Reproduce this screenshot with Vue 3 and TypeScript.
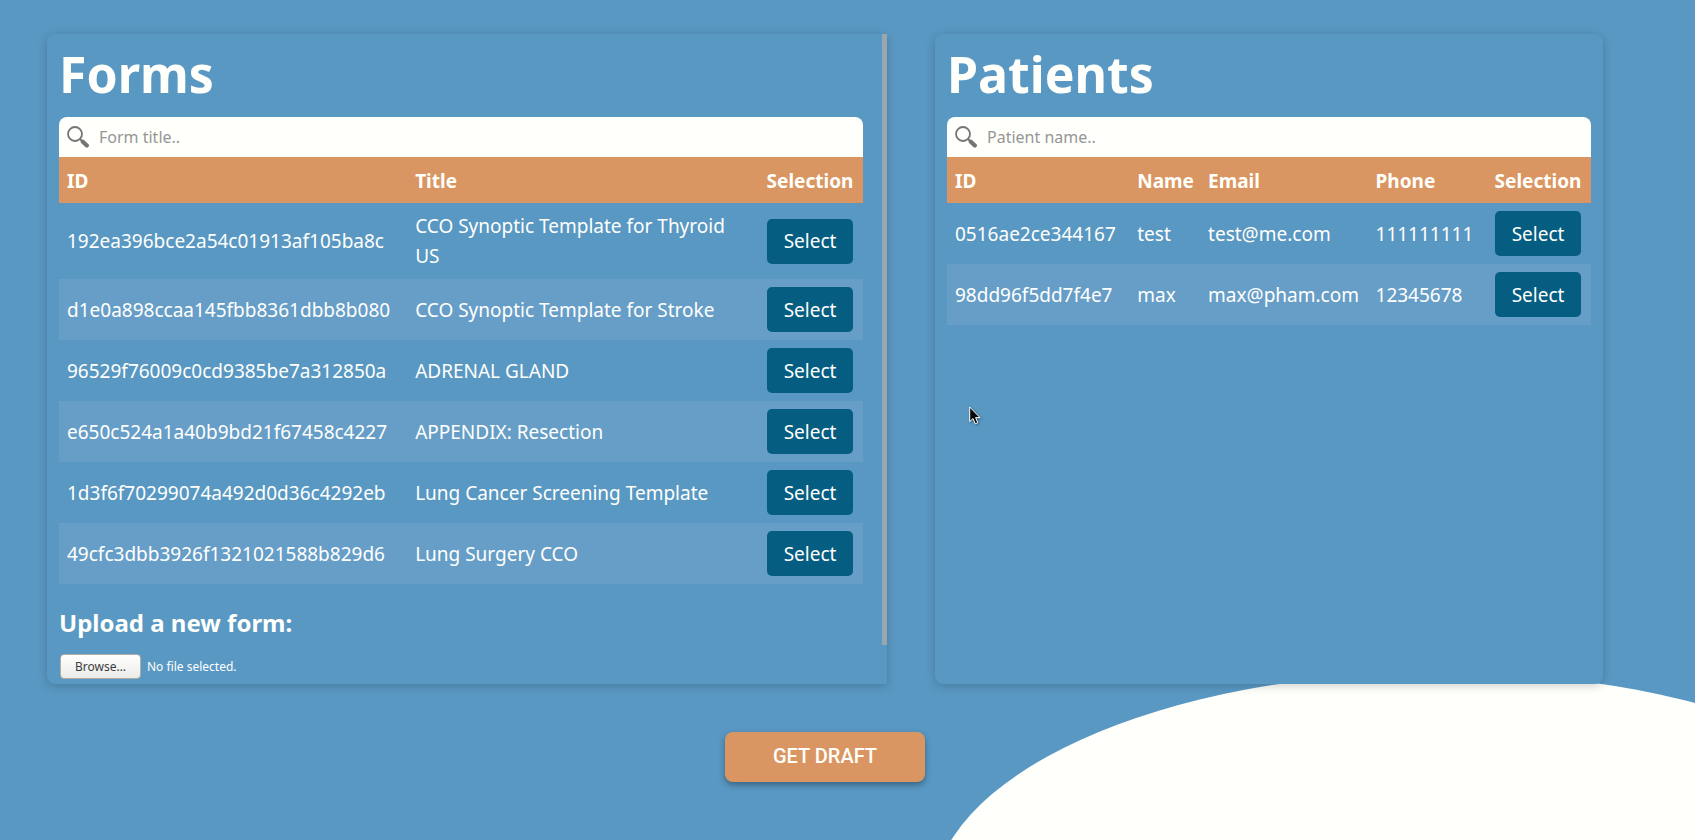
<script setup lang="ts">
import { computed, ref } from 'vue'

interface FormRow {
  id: string
  title: string
}

interface PatientRow {
  id: string
  name: string
  email: string
  phone: string
}

const forms: FormRow[] = [
  { id: '192ea396bce2a54c01913af105ba8c', title: 'CCO Synoptic Template for Thyroid US' },
  { id: 'd1e0a898ccaa145fbb8361dbb8b080', title: 'CCO Synoptic Template for Stroke' },
  { id: '96529f76009c0cd9385be7a312850a', title: 'ADRENAL GLAND' },
  { id: 'e650c524a1a40b9bd21f67458c4227', title: 'APPENDIX: Resection' },
  { id: '1d3f6f70299074a492d0d36c4292eb', title: 'Lung Cancer Screening Template' },
  { id: '49cfc3dbb3926f1321021588b829d6', title: 'Lung Surgery CCO' },
]

const patients: PatientRow[] = [
  { id: '0516ae2ce344167', name: 'test', email: 'test@me.com', phone: '111111111' },
  { id: '98dd96f5dd7f4e7', name: 'max', email: 'max@pham.com', phone: '12345678' },
]

const formQuery = ref('')
const patientQuery = ref('')
const fileName = ref('No file selected.')

const shownForms = computed(() =>
  forms.filter((f) => f.title.toLowerCase().includes(formQuery.value.toLowerCase())),
)
const shownPatients = computed(() =>
  patients.filter((p) => p.name.toLowerCase().includes(patientQuery.value.toLowerCase())),
)

function onFile(event: Event) {
  const files = (event.target as HTMLInputElement).files
  fileName.value = files && files.length ? files[0].name : 'No file selected.'
}
</script>

<template>
  <div class="page">
    <div class="blob" aria-hidden="true"></div>
    <main class="content">
      <div class="panels">
        <section class="panel panel-forms">
          <h1>Forms</h1>
          <div class="search">
            <svg class="search-icon" viewBox="0 0 22 22" aria-hidden="true">
              <circle cx="8" cy="8" r="7" fill="none" stroke="#747474" stroke-width="1.8" />
              <path d="M12.8 12.8 L15.4 15.4" stroke="#747474" stroke-width="2" />
              <path d="M15.8 15.8 L19.8 19.6" stroke="#747474" stroke-width="4.2" stroke-linecap="round" />
            </svg>
            <input v-model="formQuery" type="text" placeholder="Form title.." aria-label="Form title" />
          </div>
          <table>
            <colgroup>
              <col class="form-id" />
              <col />
              <col class="form-select" />
            </colgroup>
            <thead>
              <tr>
                <th scope="col">ID</th>
                <th scope="col">Title</th>
                <th scope="col" class="pick">Selection</th>
              </tr>
            </thead>
            <tbody>
              <tr v-for="form in shownForms" :key="form.id">
                <td>{{ form.id }}</td>
                <td class="wrap">{{ form.title }}</td>
                <td class="pick"><button type="button" class="select">Select</button></td>
              </tr>
            </tbody>
          </table>
          <h2>Upload a new form:</h2>
          <div class="upload">
            <input id="form-file" class="file-input" type="file" @change="onFile" />
            <label for="form-file" class="browse">Browse…</label>
            <span>{{ fileName }}</span>
          </div>
          <div class="thumb" aria-hidden="true"></div>
        </section>

        <section class="panel">
          <h1>Patients</h1>
          <div class="search">
            <svg class="search-icon" viewBox="0 0 22 22" aria-hidden="true">
              <circle cx="8" cy="8" r="7" fill="none" stroke="#747474" stroke-width="1.8" />
              <path d="M12.8 12.8 L15.4 15.4" stroke="#747474" stroke-width="2" />
              <path d="M15.8 15.8 L19.8 19.6" stroke="#747474" stroke-width="4.2" stroke-linecap="round" />
            </svg>
            <input v-model="patientQuery" type="text" placeholder="Patient name.." aria-label="Patient name" />
          </div>
          <table>
            <colgroup>
              <col class="patient-id" />
              <col class="patient-name" />
              <col class="patient-email" />
              <col />
              <col class="patient-select" />
            </colgroup>
            <thead>
              <tr>
                <th scope="col">ID</th>
                <th scope="col">Name</th>
                <th scope="col">Email</th>
                <th scope="col">Phone</th>
                <th scope="col" class="pick">Selection</th>
              </tr>
            </thead>
            <tbody>
              <tr v-for="patient in shownPatients" :key="patient.id">
                <td>{{ patient.id }}</td>
                <td>{{ patient.name }}</td>
                <td>{{ patient.email }}</td>
                <td>{{ patient.phone }}</td>
                <td class="pick"><button type="button" class="select">Select</button></td>
              </tr>
            </tbody>
          </table>
        </section>
      </div>
      <button type="button" class="draft">GET DRAFT</button>
    </main>
    <svg class="pointer" viewBox="0 0 12 19" aria-hidden="true">
      <path
        d="M0.7 1 V15.6 L4 12.6 L6.3 17.8 L8.8 16.7 L6.6 11.6 H11 Z"
        fill="#0a0a0a"
        stroke="#ffffff"
        stroke-width="1"
      />
    </svg>
  </div>
</template>

<style>
body {
  margin: 0;
  background: #5998c3;
}
</style>

<style scoped>
.page {
  position: relative;
  box-sizing: border-box;
  min-height: 100vh;
  overflow: hidden;
  background: #5998c3;
  color: #fffffc;
  font-family: 'Noto Sans', 'Open Sans', sans-serif;
  font-size: 19px;
  line-height: 30px;
}

.blob {
  position: absolute;
  left: 55%;
  top: 80vh;
  width: 60%;
  height: 55vh;
  border-radius: 50%;
  background: #fffffc;
}

.content {
  position: relative;
  display: flex;
  flex-direction: column;
  align-items: center;
  gap: 48px;
  padding: 34px 92px 48px 47px;
}

.panels {
  display: grid;
  grid-template-columns: 840fr 668fr;
  gap: 48px;
  width: 100%;
}

.panel {
  position: relative;
  box-sizing: border-box;
  min-width: 0;
  padding: 10px 12px 5px;
  border-radius: 8px;
  background: #5998c3;
  box-shadow: 0 2px 10px rgba(0, 0, 0, 0.2);
}

.panel-forms {
  padding-right: 24px;
  border-radius: 8px 0 0 8px;
}

h1 {
  margin: 0 0 13px;
  font-size: 50px;
  font-weight: 700;
  line-height: 60px;
}

h2 {
  margin: 23px 0 15px;
  font-size: 24px;
  font-weight: 700;
  line-height: 32px;
}

.search {
  display: flex;
  align-items: center;
  gap: 10px;
  height: 40px;
  padding: 0 8px;
  border-radius: 8px 8px 0 0;
  background: #fffffc;
}

.search-icon {
  flex: none;
  width: 22px;
  height: 22px;
}

.search input {
  flex: 1;
  min-width: 0;
  padding: 0;
  border: 0;
  outline: 0;
  background: transparent;
  color: #444444;
  font: inherit;
  font-size: 16px;
}

.search input::placeholder {
  color: #969696;
  opacity: 1;
}

table {
  width: 100%;
  border-collapse: collapse;
  table-layout: fixed;
}

.form-id {
  width: 43.3%;
}

.form-select {
  width: 106px;
}

.patient-id {
  width: 28.3%;
}

.patient-name {
  width: 11%;
}

.patient-email {
  width: 26%;
}

.patient-select {
  width: 106px;
}

th,
td {
  padding: 8px;
  text-align: left;
  white-space: nowrap;
}

th {
  padding: 9px 8px 7px;
}

td.wrap {
  white-space: normal;
}

th.pick,
td.pick {
  text-align: center;
}

thead tr {
  background: #da9662;
}

tbody tr:nth-child(even) {
  background: #679ec8;
}

.select {
  display: block;
  box-sizing: border-box;
  width: 86px;
  height: 45px;
  margin: 0 auto;
  padding: 0;
  border: 0;
  border-radius: 5px;
  background: #055e82;
  color: #fffffc;
  font: inherit;
  cursor: pointer;
}

.upload {
  display: flex;
  align-items: center;
  gap: 6px;
  padding-left: 1px;
  font-size: 12px;
  line-height: 23px;
}

.file-input {
  position: absolute;
  width: 1px;
  height: 1px;
  opacity: 0;
}

.browse {
  box-sizing: border-box;
  width: 81px;
  border: 1px solid #b3aca4;
  border-radius: 4px;
  background: linear-gradient(#ffffff, #ebebe8);
  color: #3c3c3c;
  text-align: center;
  cursor: pointer;
}

.thumb {
  position: absolute;
  top: 0;
  right: 0;
  width: 5px;
  height: 94%;
  background: #9ba7ae;
}

.draft {
  width: 200px;
  height: 50px;
  padding: 0 0 2px;
  border: 0;
  border-radius: 8px;
  background: #da9662;
  box-shadow: 0 3px 6px rgba(0, 0, 0, 0.35);
  color: #fffffc;
  font-family: Roboto, 'Liberation Sans', sans-serif;
  font-size: 20px;
  font-weight: 500;
  cursor: pointer;
}

.pointer {
  position: absolute;
  left: 969px;
  top: 406px;
  width: 12px;
  height: 19px;
  filter: drop-shadow(1px 1px 1px rgba(0, 0, 0, 0.4));
}
</style>
